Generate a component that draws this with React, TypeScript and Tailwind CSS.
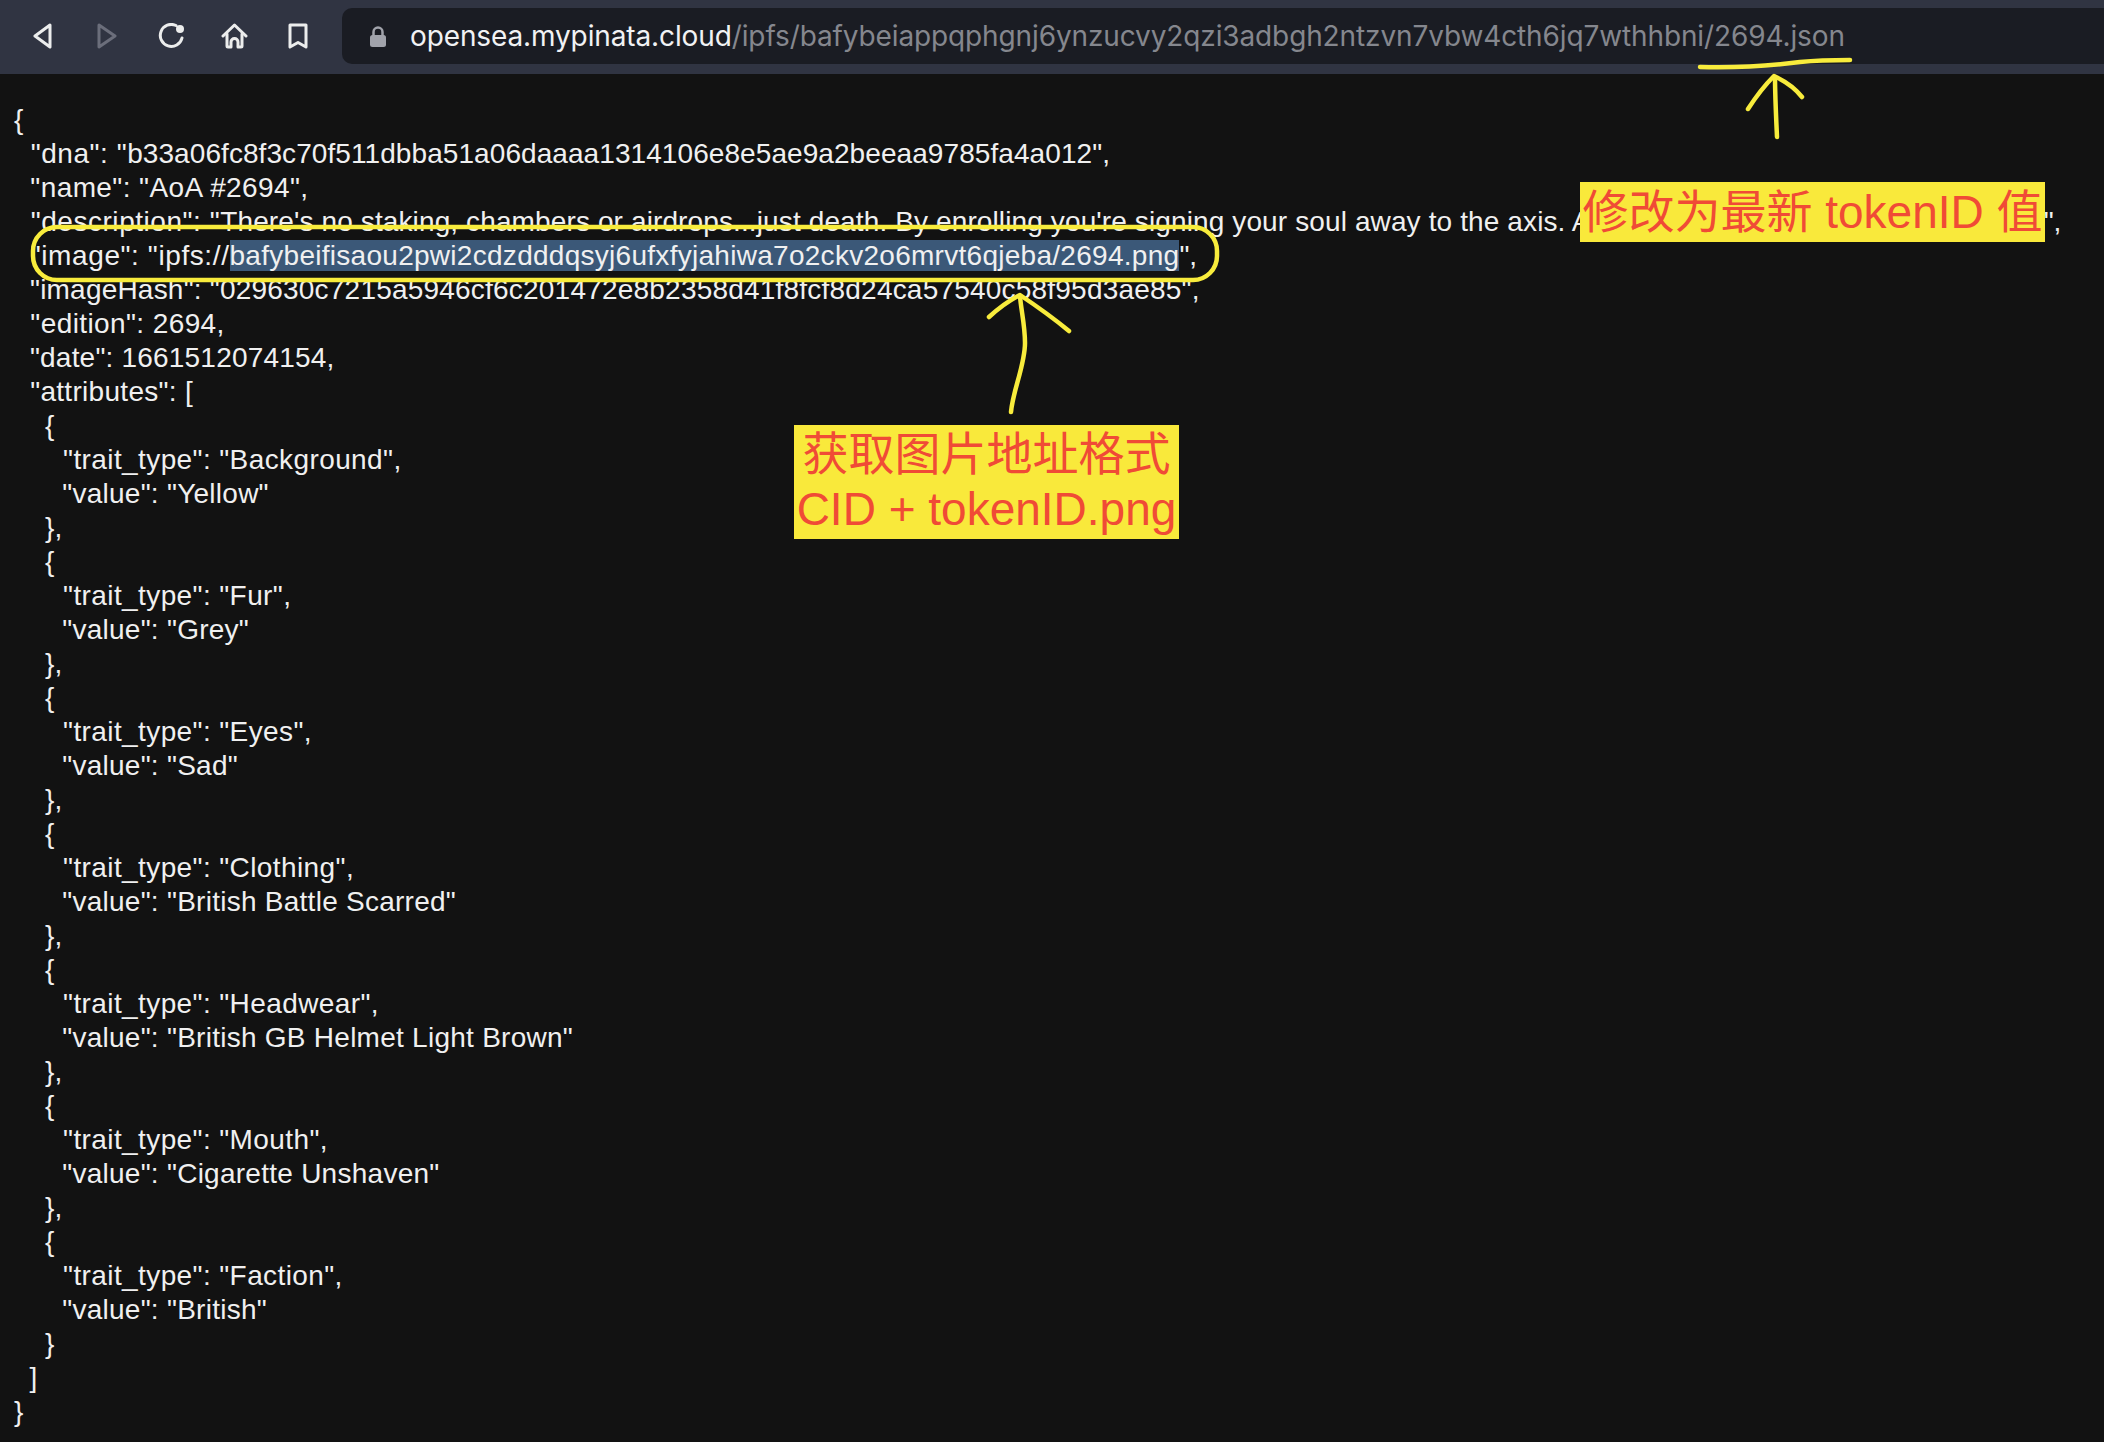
const lines = [
  { text: '  "name": "AoA #2694",', cls: "tracking-[0.4px]" },
];

const linesAfter = [
  { text: '  "imageHash": "029630c7215a5946cf6c201472e8b2358d41f8fcf8d24ca57540c58f95d3ae85",', cls: "tracking-[0.21px]" },
  { text: '  "edition": 2694,', cls: "tracking-[0.4px]" },
  { text: '  "date": 1661512074154,', cls: "tracking-[0.2px]" },
  { text: '  "attributes": [', cls: "tracking-[0.3px]" },
];

const traits = [
  ["Background", "Yellow"],
  ["Fur", "Grey"],
  ["Eyes", "Sad"],
  ["Clothing", "British Battle Scarred"],
  ["Headwear", "British GB Helmet Light Brown"],
  ["Mouth", "Cigarette Unshaven"],
  ["Faction", "British"],
];

function Annotations() {
  return (
    <svg className="absolute left-0 top-0 pointer-events-none" width="2104" height="1442" fill="none" stroke="#f8ec3c" strokeLinecap="round" strokeLinejoin="round" strokeWidth="4.5">
      <path d="M1700 67 C1740 68 1770 66 1800 62 C1820 60 1835 60 1850 60" />
      <path d="M1777 137 C1776 115 1775 95 1775 77" />
      <path d="M1748 109 C1757 95 1765 85 1774 76 C1785 81 1795 88 1802 97" />
      <rect x="33" y="227" width="1184" height="53" rx="24" />
      <path d="M1011 412 C1013 390 1025 365 1025 343 C1025 325 1021 310 1020 296" />
      <path d="M989 317 C1000 307 1010 300 1020 295 C1035 305 1052 317 1069 331" />
    </svg>
  );
}

function Toolbar() {
  return (
    <div className="h-[74px] bg-[#303442] pt-2 pl-[33px] flex">
      <div className="flex h-14 items-center w-[309px] shrink-0">
        <svg width="19" height="26" viewBox="0 0 19 26" fill="none" stroke="#eceded" strokeWidth="3" strokeLinejoin="round" className="mr-[45px]">
          <path d="M17 2 L2 13 L17 24 Z" />
        </svg>
        <svg width="20" height="26" viewBox="0 0 20 26" fill="none" stroke="#6b6e7b" strokeWidth="3" strokeLinejoin="round" className="mr-[41px]">
          <path d="M2 2 L18 13 L2 24 Z" />
        </svg>
        <svg width="26" height="26" viewBox="0 0 26 26" fill="none" stroke="#eceded" strokeWidth="3" strokeLinecap="round" className="mr-[37px]">
          <path d="M18 2.5 A11 11 0 1 0 24 15" />
          <circle cx="22" cy="6" r="4" fill="#eceded" stroke="none" />
        </svg>
        <svg width="27" height="26" viewBox="0 0 27 26" fill="none" stroke="#eceded" strokeWidth="3" strokeLinejoin="round" strokeLinecap="round" className="mr-[40px]">
          <path d="M2 13 L13.5 2 L25 13" />
          <path d="M6 11 V23 Q6 24 7 24 H10 V19 A3.5 3.5 0 0 1 17 19 V24 H20 Q21 24 21 23 V11" />
        </svg>
        <svg width="20" height="26" viewBox="0 0 20 26" fill="none" stroke="#eceded" strokeWidth="3" strokeLinejoin="round">
          <path d="M2 2 H18 V24 L10 19.5 L2 24 Z" />
        </svg>
      </div>
      <div className="flex-1 h-14 bg-[#1a1c23] rounded-l-[10px] flex items-center pl-7">
        <svg width="16" height="21" viewBox="0 0 16 21" className="mr-[24px]">
          <path d="M3.5 10 V6 A4.5 4.5 0 0 1 12.5 6 V10" fill="none" stroke="#a1a3ab" strokeWidth="2.5" />
          <rect x="0" y="9" width="16" height="12" rx="2.5" fill="#a1a3ab" />
        </svg>
        <span className="font-['Inter',sans-serif] text-[28px] tracking-[-0.12px] text-[#85878e] whitespace-nowrap">
          <span className="text-[#f1f2f4]">opensea.mypinata.cloud</span>/ipfs/bafybeiappqphgnj6ynzucvy2qzi3adbgh2ntzvn7vbw4cth6jq7wthhbni/2694.json
        </span>
      </div>
    </div>
  );
}

export default function App() {
  return (
    <div className="relative w-[2104px] h-[1442px] overflow-hidden bg-[#121212]">
      <Toolbar />
      <pre className="pt-[29px] pl-[14px] font-['Liberation_Sans',sans-serif] text-[28px] leading-[34px] text-[#f0f0f0]">
        <div>{"{"}</div>
        <div>
          <span className="tracking-[0.55px]">{'  "dna": "'}</span>
          <span className="tracking-[0.075px]">b33a06fc8f3c70f511dbba51a06daaaa1314106e8e5ae9a2beeaa9785fa4a012</span>
          {'",'}
        </div>
        {lines.map((l) => (
          <div key={l.text} className={l.cls}>{l.text}</div>
        ))}
        <div>
          <span className="tracking-[0.55px]">{'  "description": "'}</span>
          <span className="tracking-[0.12px]">{"There's no staking, chambers or airdrops...just death. By enrolling you're signing your soul away to the axis. A"}</span>
          <span className="inline-block w-[453px]" />
          {'",'}
        </div>
        <div>
          <span className="tracking-[0.6px]">{'  "image": "ipfs://'}</span>
          <span className="bg-[#3b5878] tracking-[0.28px]">bafybeifisaou2pwi2cdzdddqsyj6ufxfyjahiwa7o2ckv2o6mrvt6qjeba/2694.png</span>
          {'",'}
        </div>
        {linesAfter.map((l) => (
          <div key={l.text} className={l.cls}>{l.text}</div>
        ))}
        {traits.map(([t, v], i) => (
          <div key={t}>
            <div>{"    {"}</div>
            <div className="tracking-[0.4px]">{`      "trait_type": "${t}",`}</div>
            <div className="tracking-[0.26px]">{`      "value": "${v}"`}</div>
            <div>{i < traits.length - 1 ? "    }," : "    }"}</div>
          </div>
        ))}
        <div>{"  ]"}</div>
        <div>{"}"}</div>
      </pre>
      <Annotations />
      <div className="absolute left-[1580px] top-[182px] w-[465px] h-[60px] bg-[#f9e93b] text-[#f04b36] font-['Liberation_Sans','Noto_Sans_CJK_SC',sans-serif] text-[46px] leading-[60px] text-center whitespace-nowrap">
        修改为最新 tokenID 值
      </div>
      <div className="absolute left-[794px] top-[425px] w-[385px] h-[114px] pt-[2px] bg-[#f9e93b] text-[#f04b36] font-['Liberation_Sans','Noto_Sans_CJK_SC',sans-serif] text-[46px] leading-[55px] text-center whitespace-nowrap">
        <div>获取图片地址格式</div>
        <div>CID + tokenID.png</div>
      </div>
    </div>
  );
}
